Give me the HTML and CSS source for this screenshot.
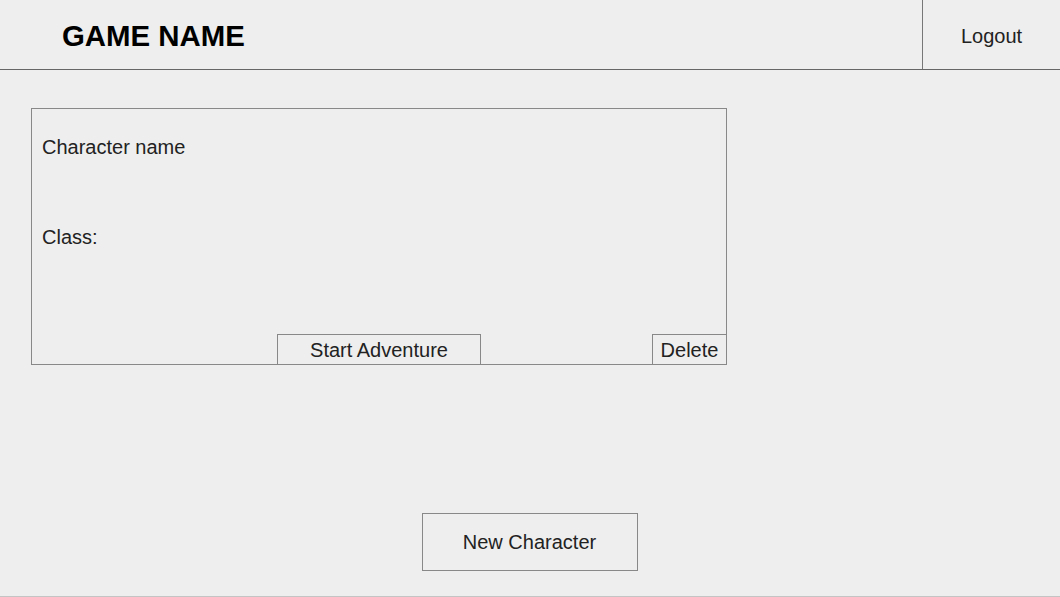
FILE: index.html
```html
<!DOCTYPE html>
<html lang="en">
<head>
  <meta charset="UTF-8">
  <title>Game Name - Characters</title>
  <link rel="stylesheet" href="styles.css">
</head>
<body>
  <div class="page">
    <header class="topbar">
      <h1 class="title">GAME NAME</h1>
      <button class="logout">Logout</button>
    </header>

    <main class="content">
      <div class="card">
        <div class="card-info">
          <div class="char-name">Character name</div>
          <div class="char-class">Class:</div>
        </div>
        <div class="card-actions">
          <button class="btn start-btn">Start Adventure</button>
          <button class="btn delete-btn">Delete</button>
        </div>
      </div>

      <div class="new-row">
        <button class="btn new-btn">New Character</button>
      </div>
    </main>
  </div>
</body>
</html>
```

FILE: styles.css
```css
body {
  margin: 0;
  font-family: Arial, "Liberation Sans", sans-serif;
  background-color: #eeeeee;
  color: #222;
}

.page {
  box-sizing: border-box;
  height: 597px;
  border-bottom: 1px solid #c4c4c4;
  display: flex;
  flex-direction: column;
}

.topbar {
  display: flex;
  align-items: stretch;
  height: 69px;
  border-bottom: 1px solid #666;
}

.title {
  flex: 1;
  margin: 0;
  padding-left: 62px;
  font-size: 29.4px;
  font-weight: bold;
  color: #000;
  line-height: 71px;
}

.logout {
  width: 138px;
  border: none;
  border-left: 1px solid #777;
  background: transparent;
  font-family: inherit;
  font-size: 20px;
  color: #222;
  padding: 3px 0 0;
  cursor: pointer;
}

.content {
  flex: 1;
  padding: 38px 0 0 31px;
  display: flex;
  flex-direction: column;
}

.card {
  box-sizing: border-box;
  width: 696px;
  height: 257px;
  border: 1px solid #888;
  display: flex;
  flex-direction: column;
}

.card-info {
  padding: 26px 0 0 10px;
  font-size: 20px;
  line-height: 24px;
}

.char-class {
  margin-top: 66px;
}

.card-actions {
  margin-top: auto;
  margin-bottom: -1px;
  margin-right: -1px;
  display: flex;
  justify-content: space-between;
  padding-left: 245px;
}

.btn {
  box-sizing: border-box;
  border: 1px solid #888;
  background-color: #eeeeee;
  font-family: inherit;
  font-size: 20px;
  color: #222;
  padding: 0;
  cursor: pointer;
}

.start-btn {
  width: 204px;
  height: 31px;
  padding-top: 2px;
}

.delete-btn {
  width: 75px;
  height: 31px;
  padding-top: 2px;
}

.new-row {
  display: flex;
  justify-content: center;
  margin-top: 148px;
  margin-left: -32px;
}

.new-btn {
  width: 216px;
  height: 58px;
}
```
